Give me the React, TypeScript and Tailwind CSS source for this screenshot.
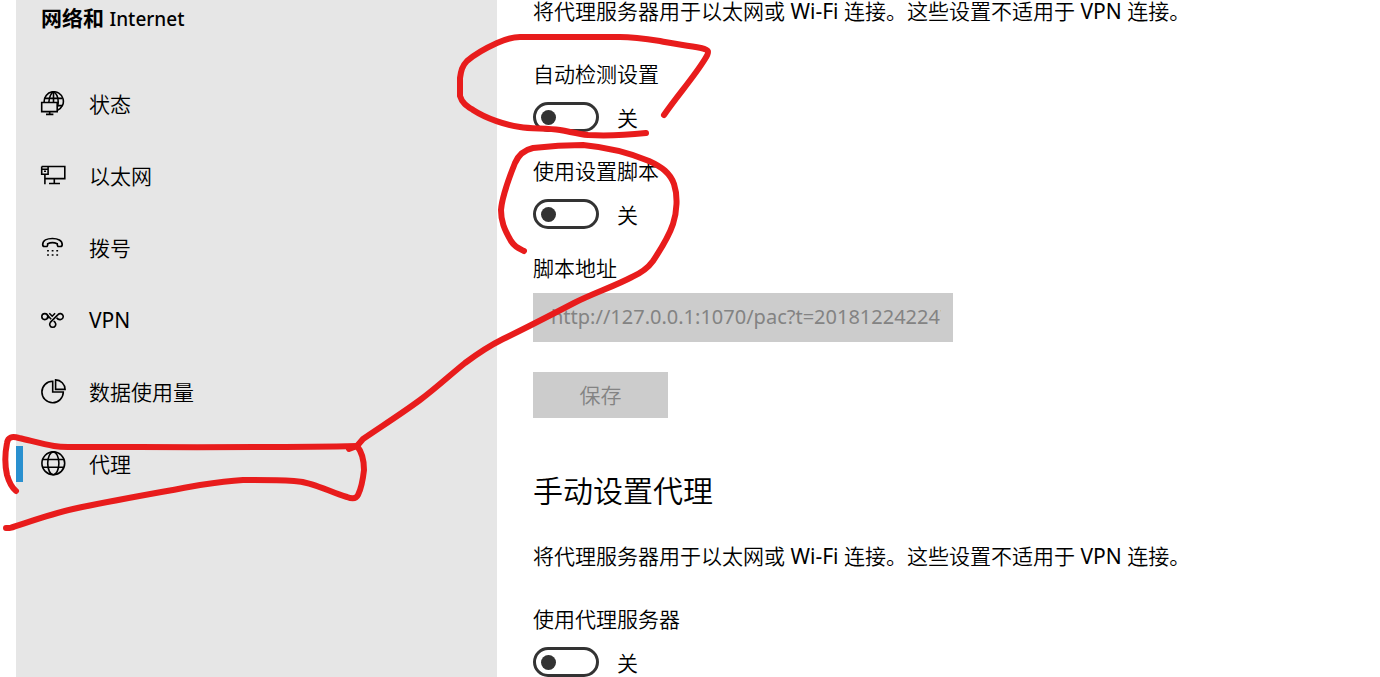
import React, { useState } from "react";

type IconProps = { children: React.ReactNode };

function Icon({ children }: IconProps) {
  return (
    <svg
      viewBox="0 0 26 26"
      className="h-[26px] w-[26px] shrink-0"
      fill="none"
      stroke="currentColor"
      strokeWidth="1.4"
      aria-hidden="true"
    >
      {children}
    </svg>
  );
}

const StatusIcon = () => (
  <Icon>
    <g strokeWidth="1.600">
      <path d="M4.200 11A9.600 9.600 0 1 1 17.500 19.200" />
      <path d="M8.900 11C9.200 6.500 11 1.500 13.500 1C16.500 2 18.300 6.500 18.200 11C18.200 12.500 18 14 17.500 15.500" />
      <path d="M4.800 7.400H22.300M17.500 14.600H22.500" />
      <path d="M13.500 1V11" />
      <path d="M1.700 11.500H17.200V20.600H1.700ZM9.700 21V23.500M6 23.400H13.400" />
    </g>
  </Icon>
);

const EthernetIcon = () => (
  <Icon>
    <path
      d="M1.700 3.500H24.800V15.600H8M1.700 3.500V11.300H8.100V3.500M4.900 11.300V21.200M8.500 15.600H4.900M14.300 16V20.500M9 20.500H20"
      strokeWidth="1.600"
    />
    <path d="M2 6.300H8M4 8.300H6" strokeWidth="1.500" />
  </Icon>
);

const DialupIcon = () => (
  <Icon>
    <path
      d="M4.500 11.500C3 11.500 2.700 10.800 2.700 9.500C2.700 5.600 7 3.500 12.400 3.500C17.900 3.500 22.200 5.600 22.200 9.500C22.200 10.800 21.900 11.500 20.400 11.500H18.600C17.400 11.500 17.300 10.800 17.200 8.700C14.300 7.500 10.600 7.500 7.700 8.700C7.700 10.800 7.600 11.500 6.300 11.500Z"
      strokeWidth="1.700"
    />
    <path
      d="M7.100 15.700H8.900M11.700 15.700H13.500M16.300 15.700H18.100M7.100 20.100H8.900M11.700 20.100H13.500M16.300 20.100H18.100"
      strokeWidth="1.500"
    />
  </Icon>
);

const VpnIcon = () => (
  <Icon>
    <g strokeWidth="1.600">
      <circle cx="4.800" cy="9.600" r="3" />
      <path d="M7.100 7.700L11.200 12.200M7 11.600L9.200 9.400" />
      <path d="M9.300 6.300L12.200 9.200L15.100 6.300" />
      <path d="M16.600 10.800C17.600 12.300 19 12.700 20.300 12.600A3 3 0 1 0 18 7.600L10.300 15.400C8.800 17.300 10.200 20.300 12.700 20.300C15.300 20.300 16.700 17.300 15.100 15.400L13.700 14" />
    </g>
  </Icon>
);

const UsageIcon = () => (
  <Icon>
    <g strokeWidth="1.600">
      <path d="M12.700 2.300A10.700 10.700 0 1 0 23.300 13H12.700Z" />
      <path d="M15.600 0.900A9.700 9.700 0 0 1 25.100 10.400H15.600Z" />
    </g>
  </Icon>
);

const ProxyIcon = () => (
  <Icon>
    <g strokeWidth="1.600">
      <circle cx="13.300" cy="12.300" r="11.400" />
      <ellipse cx="13.300" cy="12.300" rx="5.600" ry="11.400" />
      <path d="M2.600 8.500H24M2.600 16.200H24" />
    </g>
  </Icon>
);

const navItems = [
  { id: "status", label: "状态", icon: <StatusIcon /> },
  { id: "ethernet", label: "以太网", icon: <EthernetIcon /> },
  { id: "dialup", label: "拨号", icon: <DialupIcon /> },
  {
    id: "vpn",
    label: <span className="font-normal">VPN</span>,
    icon: <VpnIcon />,
  },
  { id: "usage", label: "数据使用量", icon: <UsageIcon /> },
  { id: "proxy", label: "代理", icon: <ProxyIcon />, active: true },
];

function Toggle({ id, label }: { id: string; label: string }) {
  const [on, setOn] = useState(false);
  return (
    <div className="flex flex-col items-start gap-[17px]">
      <label htmlFor={id}>{label}</label>
      <div className="flex items-center gap-[18px]">
        <input
          id={id}
          type="checkbox"
          role="switch"
          checked={on}
          onChange={(e) => setOn(e.target.checked)}
          className="flex h-[30px] w-[66px] appearance-none items-center rounded-full border-3 border-[#333333] px-[5px] before:size-[15px] before:rounded-full before:bg-[#333333] checked:justify-end checked:border-[#2a90cf] checked:bg-[#2a90cf] checked:before:bg-white"
        />
        <span className="pt-0.5">{on ? "开" : "关"}</span>
      </div>
    </div>
  );
}

function Description() {
  return (
    <p className="mb-[41px]">
      将代理服务器用于以太网或 <span className="font-normal">Wi-Fi </span>
      连接。这些设置不适用于 <span className="font-normal">VPN </span>连接。
    </p>
  );
}

function Scribbles() {
  return (
    <svg
      className="pointer-events-none absolute top-0 left-0"
      width="720"
      height="540"
      viewBox="0 0 720 540"
      fill="none"
      stroke="#e81c1c"
      strokeWidth="6"
      strokeLinecap="round"
      strokeLinejoin="round"
      aria-hidden="true"
    >
      <path d="M664 115C677 96 694 77 705 59C710 51 709 50 701 48C684 45 669 43 660 41C647 39 634 37 620 37H520C511 37 504 40 497 43C486 48 475 54 467 61C462 66 461 71 460 78V96C462 103 467 106 473 110C487 119 506 125 520 127C531 129 546 128 560 130C571 132 579 134 588 135C607 136 627 135 646 133" />
      <path d="M524 251C518 248 515 247 511 241C504 229 501 221 501 210C502 196 509 178 515 163C518 156 524 150 533 148C550 146 566 145 583 145C604 147 630 153 649 161C662 167 670 173 674 184C678 196 677 212 673 224C669 236 661 249 653 261C648 268 641 273 632 277C615 286 594 293 574 303C549 316 524 329 503 339C489 346 477 354 465 363C450 375 435 389 420 400C401 414 382 426 363 439L357 446L349 449" />
      <path d="M16 491C11 487 9 482 7 475C5 466 5 453 7 443C8 437 12 436 19 438C32 441 43 444 54 446Q60 447 68 447C160 447 270 448 357 446C362 452 364 462 364 470C363 479 361 489 358 495C356 499 352 499 347 497C329 492 314 482 294 481C276 480 260 480 243 480C226 481 213 483 200 485C157 493 115 500 73 509C50 514 26 523 10 528H6" />
    </svg>
  );
}

export default function App() {
  const [address, setAddress] = useState(
    "http://127.0.0.1:1070/pac?t=20181224224715"
  );
  return (
    <div className="relative flex min-h-screen overflow-hidden bg-white pl-4 font-['Noto_Sans','Noto_Sans_CJK_SC',sans-serif] text-[21px] leading-[22px] font-[350] text-black">
      <aside className="w-[481px] shrink-0 bg-[#e6e6e6]">
        <h1 className="px-[25px] pt-[7px] pb-[38px] text-[19px] font-medium">
          <span className="text-[21px] font-bold">网络和 </span>Internet
        </h1>
        <nav>
          {navItems.map(({ id, label, icon, active }) => (
            <a
              key={id}
              href={`#${id}`}
              aria-current={active ? "page" : undefined}
              className="flex h-[72px] items-center"
            >
              <span
                className={
                  active ? "h-9 w-[7px] bg-[#2a90cf]" : "h-9 w-[7px]"
                }
              />
              <span className="mr-[23px] ml-[17px]">{icon}</span>
              {label}
            </a>
          ))}
        </nav>
      </aside>

      <main className="min-w-0 flex-1 pl-9">
        <Description />
        <div className="flex flex-col gap-7">
          <Toggle id="auto-detect" label="自动检测设置" />
          <Toggle id="use-script" label="使用设置脚本" />
          <div className="flex flex-col items-start">
            <label htmlFor="script-address">脚本地址</label>
            <input
              id="script-address"
              type="text"
              disabled
              value={address}
              onChange={(e) => setAddress(e.target.value)}
              className="mt-3.5 h-[49px] w-[420px] max-w-full bg-[#cccccc] pr-3 pb-0.5 pl-[18px] text-[20px] font-normal text-[#838383]"
            />
            <button
              type="button"
              disabled
              className="mt-[30px] h-[46px] w-[135px] bg-[#cccccc] text-[#838383]"
            >
              保存
            </button>
          </div>
        </div>
        <h2 className="mt-[53px] mb-[34px] text-[30px] leading-10">
          手动设置代理
        </h2>
        <Description />
        <Toggle id="use-proxy" label="使用代理服务器" />
      </main>

      <Scribbles />
    </div>
  );
}
